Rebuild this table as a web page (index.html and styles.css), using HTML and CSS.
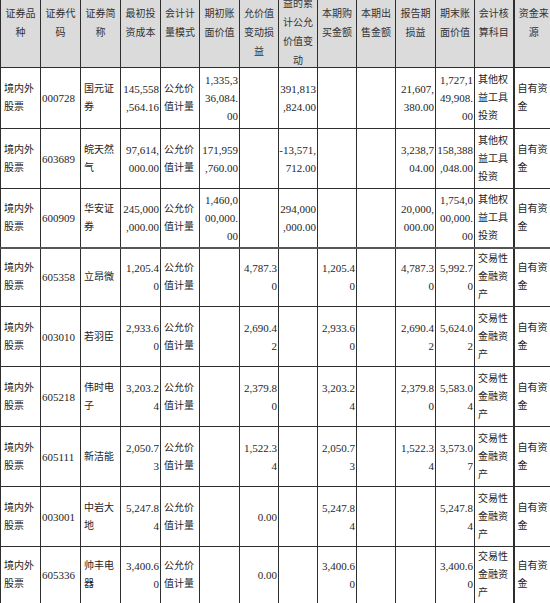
FILE: index.html
```html
<!DOCTYPE html>
<html lang="zh-CN">
<head>
<meta charset="utf-8">
<title>证券投资情况</title>
<link rel="stylesheet" href="styles.css">
</head>
<body>
<table class="sec-table">
  <colgroup>
    <col class="w40"><col class="w40"><col class="w40"><col class="w40"><col class="w39">
    <col class="w40"><col class="w39"><col class="w39"><col class="w39"><col class="w39">
    <col class="w40"><col class="w39"><col class="w39"><col class="w40">
  </colgroup>
  <thead>
    <tr class="head">
      <th>证券品<br>种</th>
      <th>证券代<br>码</th>
      <th>证券简<br>称</th>
      <th>最初投<br>资成本</th>
      <th>会计计<br>量模式</th>
      <th>期初账<br>面价值</th>
      <th>本期公<br>允价值<br>变动损<br>益</th>
      <th><span class="tall">计入权<br>益的累<br>计公允<br>价值变<br>动</span></th>
      <th>本期购<br>买金额</th>
      <th>本期出<br>售金额</th>
      <th>报告期<br>损益</th>
      <th>期末账<br>面价值</th>
      <th class="sep">会计核<br>算科目</th>
      <th>资金来<br>源</th>
    </tr>
  </thead>
  <tbody>
    <tr class="r61">
      <td class="txt">境内外<br>股票</td>
      <td class="txt code">000728</td>
      <td class="txt">国元证<br>券</td>
      <td class="num">145,558<br>,564.16</td>
      <td class="txt">公允价<br>值计量</td>
      <td class="num">1,335,3<br>36,084.<br>00</td>
      <td class="num"></td>
      <td class="num">391,813<br>,824.00</td>
      <td class="num"></td>
      <td class="num"></td>
      <td class="num">21,607,<br>380.00</td>
      <td class="num">1,727,1<br>49,908.<br>00</td>
      <td class="txt sep">其他权<br>益工具<br>投资</td>
      <td class="txt">自有资<br>金</td>
    </tr>
    <tr class="r60">
      <td class="txt">境内外<br>股票</td>
      <td class="txt code">603689</td>
      <td class="txt">皖天然<br>气</td>
      <td class="num">97,614,<br>000.00</td>
      <td class="txt">公允价<br>值计量</td>
      <td class="num">171,959<br>,760.00</td>
      <td class="num"></td>
      <td class="num">-13,571,<br>712.00</td>
      <td class="num"></td>
      <td class="num"></td>
      <td class="num">3,238,7<br>04.00</td>
      <td class="num">158,388<br>,048.00</td>
      <td class="txt sep">其他权<br>益工具<br>投资</td>
      <td class="txt">自有资<br>金</td>
    </tr>
    <tr class="r59 split">
      <td class="txt">境内外<br>股票</td>
      <td class="txt code">600909</td>
      <td class="txt">华安证<br>券</td>
      <td class="num">245,000<br>,000.00</td>
      <td class="txt">公允价<br>值计量</td>
      <td class="num">1,460,0<br>00,000.<br>00</td>
      <td class="num"></td>
      <td class="num">294,000<br>,000.00</td>
      <td class="num"></td>
      <td class="num"></td>
      <td class="num">20,000,<br>000.00</td>
      <td class="num">1,754,0<br>00,000.<br>00</td>
      <td class="txt sep">其他权<br>益工具<br>投资</td>
      <td class="txt">自有资<br>金</td>
    </tr>
    <tr class="r59">
      <td class="txt">境内外<br>股票</td>
      <td class="txt code">605358</td>
      <td class="txt">立昂微</td>
      <td class="num">1,205.4<br>0</td>
      <td class="txt">公允价<br>值计量</td>
      <td class="num"></td>
      <td class="num">4,787.3<br>0</td>
      <td class="num"></td>
      <td class="num">1,205.4<br>0</td>
      <td class="num"></td>
      <td class="num">4,787.3<br>0</td>
      <td class="num">5,992.7<br>0</td>
      <td class="txt sep">交易性<br>金融资<br>产</td>
      <td class="txt">自有资<br>金</td>
    </tr>
    <tr class="r60">
      <td class="txt">境内外<br>股票</td>
      <td class="txt code">003010</td>
      <td class="txt">若羽臣</td>
      <td class="num">2,933.6<br>0</td>
      <td class="txt">公允价<br>值计量</td>
      <td class="num"></td>
      <td class="num">2,690.4<br>2</td>
      <td class="num"></td>
      <td class="num">2,933.6<br>0</td>
      <td class="num"></td>
      <td class="num">2,690.4<br>2</td>
      <td class="num">5,624.0<br>2</td>
      <td class="txt sep">交易性<br>金融资<br>产</td>
      <td class="txt">自有资<br>金</td>
    </tr>
    <tr class="r60">
      <td class="txt">境内外<br>股票</td>
      <td class="txt code">605218</td>
      <td class="txt">伟时电<br>子</td>
      <td class="num">3,203.2<br>4</td>
      <td class="txt">公允价<br>值计量</td>
      <td class="num"></td>
      <td class="num">2,379.8<br>0</td>
      <td class="num"></td>
      <td class="num">3,203.2<br>4</td>
      <td class="num"></td>
      <td class="num">2,379.8<br>0</td>
      <td class="num">5,583.0<br>4</td>
      <td class="txt sep">交易性<br>金融资<br>产</td>
      <td class="txt">自有资<br>金</td>
    </tr>
    <tr class="r60">
      <td class="txt">境内外<br>股票</td>
      <td class="txt code">605111</td>
      <td class="txt">新洁能</td>
      <td class="num">2,050.7<br>3</td>
      <td class="txt">公允价<br>值计量</td>
      <td class="num"></td>
      <td class="num">1,522.3<br>4</td>
      <td class="num"></td>
      <td class="num">2,050.7<br>3</td>
      <td class="num"></td>
      <td class="num">1,522.3<br>4</td>
      <td class="num">3,573.0<br>7</td>
      <td class="txt sep">交易性<br>金融资<br>产</td>
      <td class="txt">自有资<br>金</td>
    </tr>
    <tr class="r60">
      <td class="txt">境内外<br>股票</td>
      <td class="txt code">003001</td>
      <td class="txt">中岩大<br>地</td>
      <td class="num">5,247.8<br>4</td>
      <td class="txt">公允价<br>值计量</td>
      <td class="num"></td>
      <td class="num">0.00</td>
      <td class="num"></td>
      <td class="num">5,247.8<br>4</td>
      <td class="num"></td>
      <td class="num"></td>
      <td class="num">5,247.8<br>4</td>
      <td class="txt sep">交易性<br>金融资<br>产</td>
      <td class="txt">自有资<br>金</td>
    </tr>
    <tr class="r57">
      <td class="txt">境内外<br>股票</td>
      <td class="txt code">605336</td>
      <td class="txt">帅丰电<br>器</td>
      <td class="num">3,400.6<br>0</td>
      <td class="txt">公允价<br>值计量</td>
      <td class="num"></td>
      <td class="num">0.00</td>
      <td class="num"></td>
      <td class="num">3,400.6<br>0</td>
      <td class="num"></td>
      <td class="num"></td>
      <td class="num">3,400.6<br>0</td>
      <td class="txt sep">交易性<br>金融资<br>产</td>
      <td class="txt">自有资<br>金</td>
    </tr>
  </tbody>
</table>
</body>
</html>
```
FILE: styles.css
```css
html, body {
  margin: 0;
  padding: 0;
  background: #ffffff;
}

.sec-table {
  border-collapse: collapse;
  table-layout: fixed;
  width: 553px;
  margin-top: -23px;
  font-family: "Liberation Serif", "Noto Sans CJK SC", serif;
  font-size: 11px;
  line-height: 18px;
  color: #1e1e1e;
}

.w40 { width: 40px; }
.w39 { width: 39px; }

.sec-table th,
.sec-table td {
  border: 1px solid #2e2e2e;
  padding: 0 1px 0 2px;
  vertical-align: middle;
  white-space: nowrap;
}

.sec-table td {
  overflow: hidden;
}

.sec-table th {
  background: #dbdbdb;
  color: #333333;
  font-weight: normal;
  font-size: 10px;
  line-height: 19px;
  text-align: center;
  padding: 0 1px;
}

.tall {
  display: block;
  margin: -3px 0;
}

.head { height: 89px; }
.r61 { height: 61px; }
.r60 { height: 60px; }
.r59 { height: 59px; }
.r57 { height: 57px; }

.sec-table td.num {
  text-align: right;
  padding: 0 1px 0 0;
}

.sec-table td.txt {
  text-align: left;
  font-size: 10px;
  padding-left: 3px;
}

.sec-table td.code {
  font-size: 11px;
  padding-left: 1px;
}

.sec-table .sep {
  border-right: 2px solid #2e2e2e;
}

.split td {
  border-bottom: 2px solid #555555;
}
```
